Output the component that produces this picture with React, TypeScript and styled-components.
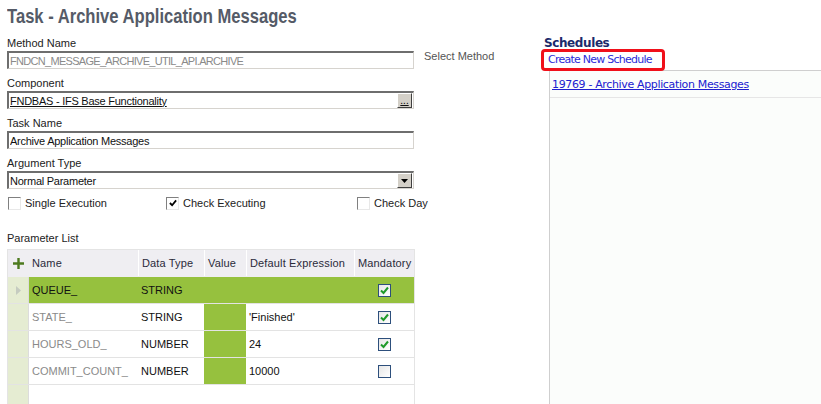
import React from 'react';
import styled, { createGlobalStyle } from 'styled-components';

const GlobalStyle = createGlobalStyle`
  html, body {
    margin: 0;
    padding: 0;
    background: #ffffff;
  }
  body {
    font-family: "Liberation Sans", Arial, sans-serif;
    font-size: 11px;
    color: #222;
  }
`;

const Page = styled.div`
  width: 821px;
  height: 404px;
  overflow: hidden;
  display: flex;
  box-sizing: border-box;
`;

const LeftColumn = styled.div`
  width: 541px;
  padding: 4px 0 0 7px;
  box-sizing: border-box;
  display: flex;
  flex-direction: column;
`;

const Title = styled.h1`
  margin: 0 0 9px 0;
  font-family: "Liberation Sans", Arial, sans-serif;
  font-weight: bold;
  font-size: 21px;
  line-height: 24px;
  color: #555b67;
  white-space: nowrap;
  transform: scaleX(0.79);
  transform-origin: left center;
`;

const Field = styled.div`
  display: flex;
  flex-direction: column;
  margin-bottom: 8px;
`;

const Label = styled.div`
  font-size: 11px;
  line-height: 13px;
  color: #222;
  margin-bottom: 1px;
`;

const FieldRow = styled.div`
  display: flex;
  align-items: center;
`;

const Input = styled.div<{ $muted?: boolean; $link?: boolean; $tight?: boolean }>`
  width: 407px;
  height: 18px;
  box-sizing: border-box;
  display: flex;
  align-items: center;
  border-top: 2px solid #6e6e6e;
  border-left: 2px solid #6e6e6e;
  border-right: 1px solid #d6d3ce;
  border-bottom: 1px solid #d6d3ce;
  background: #ffffff;
  padding-left: 1px;
  font-size: 11px;
  letter-spacing: ${({ $tight }) => ($tight ? '-0.7px' : '-0.25px')};
  color: ${({ $muted }) => ($muted ? '#8a8a8a' : '#111')};
  text-decoration: ${({ $link }) => ($link ? 'underline' : 'none')};
`;

const InputText = styled.span`
  flex: 1;
  white-space: nowrap;
  overflow: hidden;
`;

const SideButton = styled.div`
  width: 15px;
  height: 15px;
  box-sizing: border-box;
  background: #d4d0c8;
  border-top: 1px solid #ffffff;
  border-left: 1px solid #ffffff;
  border-right: 1px solid #404040;
  border-bottom: 1px solid #404040;
  display: flex;
  align-items: center;
  justify-content: center;
  font-size: 10px;
  line-height: 10px;
  letter-spacing: 0;
  color: #000;
  text-decoration: none;
  margin-right: 1px;
`;

const SideHint = styled.span`
  margin-left: 10px;
  color: #555;
  font-size: 11px;
  margin-top: -8px;
`;

const CheckRow = styled.div`
  display: flex;
  align-items: center;
  margin: -2px 0 0 1px;
  height: 16px;
`;

const CheckItem = styled.label<{ $width?: number }>`
  display: flex;
  align-items: center;
  gap: 4px;
  width: ${({ $width }) => ($width ? `${$width}px` : 'auto')};
  font-size: 11px;
  color: #222;
  white-space: nowrap;
`;

const Box = styled.span`
  width: 13px;
  height: 13px;
  box-sizing: border-box;
  border-top: 1px solid #808080;
  border-left: 1px solid #808080;
  border-right: 1px solid #e8e8e8;
  border-bottom: 1px solid #e8e8e8;
  background: #fff;
  display: flex;
  align-items: center;
  justify-content: center;
`;

const SectionLabel = styled(Label)`
  margin-top: 21px;
  margin-bottom: 4px;
`;

const Grid = styled.div`
  width: 408px;
  flex: 1;
  box-sizing: border-box;
  border: 1px solid #e4e4e4;
  border-bottom: none;
  display: flex;
  flex-direction: column;
  font-family: "Liberation Sans", Arial, sans-serif;
  font-size: 11px;
`;

const GridRow = styled.div<{ $header?: boolean; $selected?: boolean }>`
  display: grid;
  grid-template-columns: 21px 109px 66px 42px 108px 1fr;
  height: 27px;
  background: ${({ $header, $selected }) =>
    $header ? '#efeef2' : $selected ? '#96c13e' : '#ffffff'};
  border-bottom: 1px solid ${({ $header }) => ($header ? '#efeef2' : '#e3e3e3')};
  box-sizing: border-box;
`;

const Cell = styled.div<{ $tone?: 'muted' | 'dark'; $green?: boolean; $center?: boolean }>`
  display: flex;
  align-items: center;
  justify-content: ${({ $center }) => ($center ? 'center' : 'flex-start')};
  padding-left: ${({ $center }) => ($center ? 0 : 3)}px;
  color: ${({ $tone }) => ($tone === 'muted' ? '#8a8a8a' : '#111')};
  background: ${({ $green }) => ($green ? '#96c13e' : 'transparent')};
  white-space: nowrap;
  overflow: hidden;
`;

const HeadCell = styled.div<{ $divider?: boolean }>`
  display: flex;
  align-items: center;
  padding-left: 3px;
  color: #2a2a3a;
  font-size: 11px;
  letter-spacing: 0.15px;
  white-space: nowrap;
  border-left: ${({ $divider }) => ($divider ? '1px solid #ffffff' : 'none')};
`;

const Gutter = styled.div`
  background: #e5ecd2;
  display: flex;
  align-items: center;
  justify-content: center;
  border-right: 1px solid #dcdcdc;
`;

const AddCell = styled.div`
  display: flex;
  align-items: center;
  justify-content: center;
`;

const FillRow = styled.div`
  flex: 1;
  display: grid;
  grid-template-columns: 21px 1fr;
`;

const Mandatory = styled.span`
  width: 13px;
  height: 13px;
  box-sizing: border-box;
  border: 1px solid #2d4f7c;
  background: linear-gradient(135deg, #e6e6e6, #ffffff);
  display: flex;
  align-items: center;
  justify-content: center;
`;

const RightColumn = styled.div`
  flex: 1;
  display: flex;
  flex-direction: column;
  padding-top: 36px;
`;

const SectionTitle = styled.div`
  font-weight: bold;
  font-size: 12px;
  line-height: 14px;
  color: #1b2a6b;
  padding-left: 3px;
  font-family: "DejaVu Sans", Verdana, sans-serif;
  letter-spacing: -0.4px;
`;

const Highlight = styled.div`
  align-self: flex-start;
  margin: -1px 0 0 0;
  border: 3px solid #f0101a;
  border-radius: 4px;
  padding: 1px 10px 2px 4px;
  position: relative;
  z-index: 1;
`;

const CreateLink = styled.a`
  font-size: 11px;
  color: #2b2bd8;
  text-decoration: none;
  font-family: "DejaVu Sans", Verdana, sans-serif;
  letter-spacing: -0.75px;
`;

const SchedulePanel = styled.div`
  flex: 1;
  margin-left: 8px;
  margin-top: -1px;
  border-left: 1px solid #cfcfcf;
  border-top: 1px solid #cfcfcf;
  background: #fbfdfb;
`;

const ScheduleItem = styled.div`
  height: 27px;
  box-sizing: border-box;
  border-bottom: 1px solid #e6e6e6;
  display: flex;
  align-items: center;
  padding-left: 2px;
`;

const ScheduleLink = styled.a`
  font-size: 11px;
  color: #2020d0;
  text-decoration: underline;
  font-family: "DejaVu Sans", Verdana, sans-serif;
  letter-spacing: -0.35px;
`;

const Tick = ({ color = '#1f9a2a', size = 9 }: { color?: string; size?: number }) => (
  <svg width={size} height={size} viewBox="0 0 9 9">
    <path d="M1 4.5 L3.5 7 L8 1.5" fill="none" stroke={color} strokeWidth="2" />
  </svg>
);

const Arrow = () => (
  <svg width="7" height="4" viewBox="0 0 7 4">
    <path d="M0 0 H7 L3.5 4 Z" fill="#000" />
  </svg>
);

const Plus = () => (
  <svg width="11" height="11" viewBox="0 0 11 11">
    <path d="M5.5 0 V11 M0 5.5 H11" stroke="#4d7a1f" strokeWidth="2.4" />
  </svg>
);

const RowMarker = () => (
  <svg width="5" height="9" viewBox="0 0 5 9">
    <path d="M0 0 L5 4.5 L0 9 Z" fill="#c5cbc0" />
  </svg>
);

type Param = { name: string; type: string; expr: string; mandatory: boolean };

const params: Param[] = [
  { name: 'QUEUE_', type: 'STRING', expr: '', mandatory: true },
  { name: 'STATE_', type: 'STRING', expr: "'Finished'", mandatory: true },
  { name: 'HOURS_OLD_', type: 'NUMBER', expr: '24', mandatory: true },
  { name: 'COMMIT_COUNT_', type: 'NUMBER', expr: '10000', mandatory: false },
];

const headers = ['Name', 'Data Type', 'Value', 'Default Expression', 'Mandatory'];

export default function App() {
  return (
    <>
      <GlobalStyle />
      <Page>
        <LeftColumn>
          <Title>Task - Archive Application Messages</Title>

          <Field>
            <Label>Method Name</Label>
            <FieldRow>
              <Input $muted $tight>
                <InputText>FNDCN_MESSAGE_ARCHIVE_UTIL_API.ARCHIVE</InputText>
              </Input>
              <SideHint>Select Method</SideHint>
            </FieldRow>
          </Field>

          <Field>
            <Label>Component</Label>
            <Input $link>
              <InputText>FNDBAS - IFS Base Functionality</InputText>
              <SideButton>...</SideButton>
            </Input>
          </Field>

          <Field>
            <Label>Task Name</Label>
            <Input>
              <InputText>Archive Application Messages</InputText>
            </Input>
          </Field>

          <Field>
            <Label>Argument Type</Label>
            <Input>
              <InputText>Normal Parameter</InputText>
              <SideButton>
                <Arrow />
              </SideButton>
            </Input>
          </Field>

          <CheckRow>
            <CheckItem $width={158}>
              <Box />
              Single Execution
            </CheckItem>
            <CheckItem $width={191}>
              <Box>
                <Tick color="#000" size={8} />
              </Box>
              Check Executing
            </CheckItem>
            <CheckItem>
              <Box />
              Check Day
            </CheckItem>
          </CheckRow>

          <SectionLabel>Parameter List</SectionLabel>

          <Grid>
            <GridRow $header>
              <AddCell>
                <Plus />
              </AddCell>
              {headers.map((h, i) => (
                <HeadCell key={h} $divider={i > 0}>
                  {h}
                </HeadCell>
              ))}
            </GridRow>
            {params.map((p, i) => (
              <GridRow key={p.name} $selected={i === 0}>
                <Gutter>{i === 0 && <RowMarker />}</Gutter>
                <Cell $tone={i === 0 ? 'dark' : 'muted'}>{p.name}</Cell>
                <Cell>{p.type}</Cell>
                <Cell $green />
                <Cell>{p.expr}</Cell>
                <Cell $center>
                  <Mandatory>{p.mandatory && <Tick />}</Mandatory>
                </Cell>
              </GridRow>
            ))}
            <FillRow>
              <Gutter />
              <div />
            </FillRow>
          </Grid>
        </LeftColumn>

        <RightColumn>
          <SectionTitle>Schedules</SectionTitle>
          <Highlight>
            <CreateLink>Create New Schedule</CreateLink>
          </Highlight>
          <SchedulePanel>
            <ScheduleItem>
              <ScheduleLink>19769 - Archive Application Messages</ScheduleLink>
            </ScheduleItem>
          </SchedulePanel>
        </RightColumn>
      </Page>
    </>
  );
}
